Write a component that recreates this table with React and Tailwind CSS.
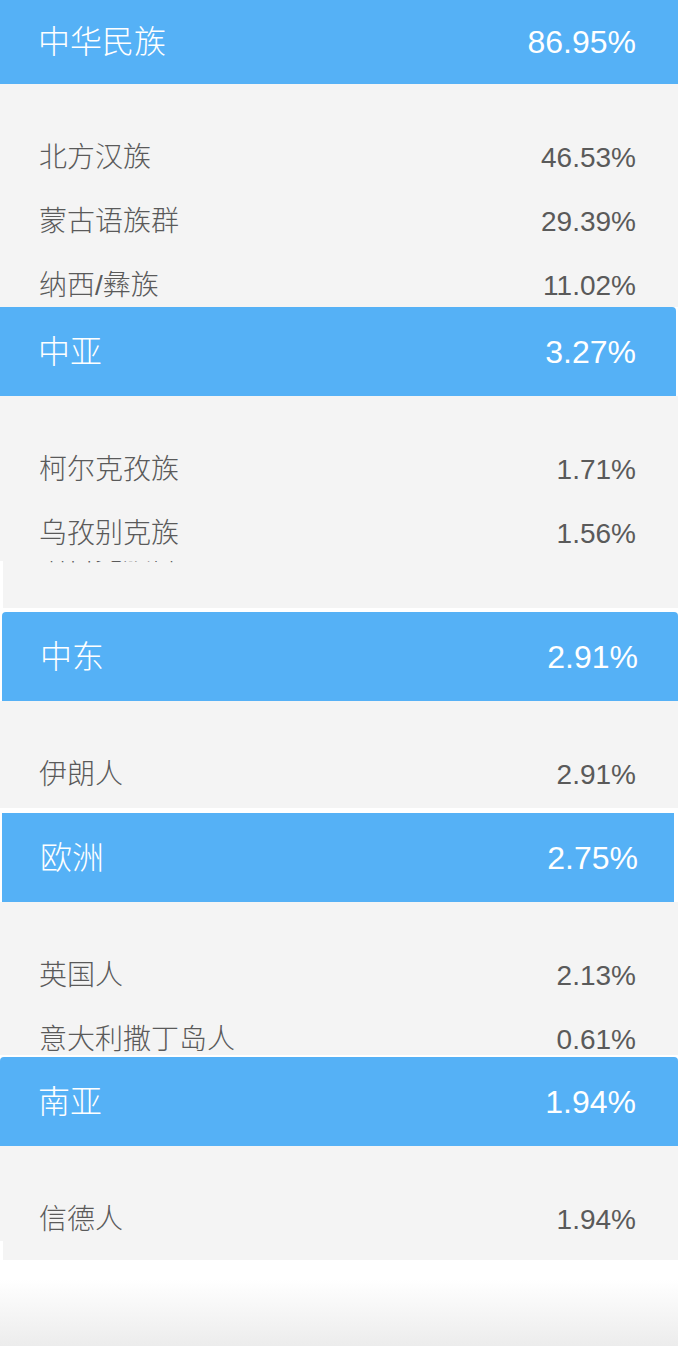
import React from "react";

const FONT = "font-['Liberation_Sans','Noto_Sans_CJK_SC',sans-serif]";

function Header({ name, pct, className = "" }) {
  return (
    <div
      className={`flex items-center justify-between bg-[#55b1f6] text-white text-[32px] font-light leading-none ${className}`}
    >
      <span>{name}</span>
      <span>{pct}</span>
    </div>
  );
}

function Row({ name, pct }) {
  return (
    <div className="flex h-16 shrink-0 items-center justify-between pl-[39px] pr-[42px] text-[28px] font-light leading-none text-[#5a5a5a]">
      <span>{name}</span>
      <span>{pct}</span>
    </div>
  );
}

export default function App() {
  return (
    <div className={`min-h-[1346px] w-full bg-white ${FONT}`}>
      {/* 中华民族 */}
      <Header name="中华民族" pct="86.95%" className="h-[84px] pl-[38px] pr-[42px]" />
      <div className="flex h-[223px] flex-col overflow-hidden bg-[#f4f4f4] pt-[42px]">
        <Row name="北方汉族" pct="46.53%" />
        <Row name="蒙古语族群" pct="29.39%" />
        <Row name="纳西/彝族" pct="11.02%" />
      </div>

      {/* 中亚 */}
      <Header name="中亚" pct="3.27%" className="mr-[2px] h-[89px] rounded-tr-[4px] pl-[38px] pr-[40px]" />
      <div className="flex h-[165px] flex-col overflow-hidden bg-[#f4f4f4] pt-[42px]">
        <Row name="柯尔克孜族" pct="1.71%" />
        <Row name="乌孜别克族" pct="1.56%" />
      </div>
      <div className="ml-[3px] h-[47px] overflow-hidden bg-[#f4f4f4]">
        <div className="-mt-[24px] h-[28px] pl-[36px] text-[28px] font-light leading-[28px] text-[#5a5a5a]">
          塔吉克族群
        </div>
      </div>
      <div className="h-[4px]" />

      {/* 中东 */}
      <Header name="中东" pct="2.91%" className="ml-[2px] h-[89px] rounded-t-[4px] pl-[38px] pr-[40px]" />
      <div className="flex h-[107px] flex-col overflow-hidden bg-[#f4f4f4] pt-[42px]">
        <Row name="伊朗人" pct="2.91%" />
      </div>
      <div className="h-[5px]" />

      {/* 欧洲 */}
      <Header name="欧洲" pct="2.75%" className="ml-[2px] mr-[4px] h-[89px] pl-[38px] pr-[36px]" />
      <div className="flex h-[153px] flex-col overflow-hidden bg-[#f4f4f4] pt-[42px]">
        <Row name="英国人" pct="2.13%" />
        <Row name="意大利撒丁岛人" pct="0.61%" />
      </div>
      <div className="h-[2px]" />

      {/* 南亚 */}
      <Header name="南亚" pct="1.94%" className="h-[89px] rounded-t-[4px] pl-[38px] pr-[42px]" />
      <div className="flex h-[95px] flex-col overflow-hidden bg-[#f4f4f4] pt-[42px]">
        <Row name="信德人" pct="1.94%" />
      </div>
      <div className="ml-[3px] h-[19px] bg-[#f4f4f4]" />

      <div className="h-[20px]" />
      <div className="h-[66px] bg-gradient-to-b from-white to-[#ececec]" />
    </div>
  );
}
